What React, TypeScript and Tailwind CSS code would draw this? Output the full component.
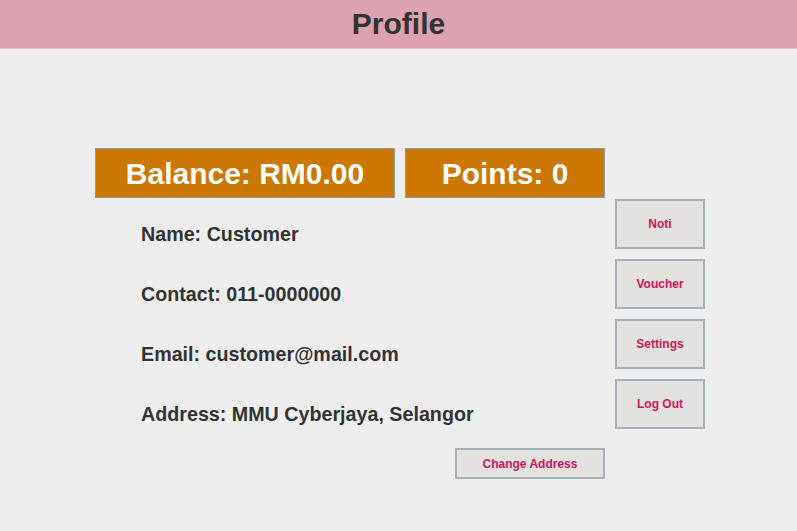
const details = [
  "Name: Customer",
  "Contact: 011-0000000",
  "Email: customer@mail.com",
  "Address: MMU Cyberjaya, Selangor",
]

const actions = ["Noti", "Voucher", "Settings", "Log Out"]

export default function App() {
  return (
    <div className="min-h-[531px] bg-[#eeeeee] font-['Liberation_Sans',Arial,sans-serif] text-[#333333]">
      <header className="h-[49px] bg-[#dda2b0] border-b border-[#e6c3cb] flex items-center justify-center">
        <h1 className="text-[30px] font-bold leading-none">Profile</h1>
      </header>

      <div className="ml-[95px] mt-[99px] w-[610px]">
        <div className="flex gap-[10px]">
          <div className="w-[300px] h-[50px] bg-[#cc7700] border border-[#8b9bab] flex items-center justify-center text-white text-[30px] font-bold">
            Balance: RM0.00
          </div>
          <div className="w-[200px] h-[50px] bg-[#cc7700] border border-[#8b9bab] flex items-center justify-center text-white text-[30px] font-bold">
            Points: 0
          </div>
        </div>

        <div className="flex gap-[10px]">
          <div className="w-[510px] flex flex-col">
            <div className="pl-[46px] pt-[24px] flex flex-col gap-[36px]">
              {details.map((line) => (
                <p key={line} className="text-[19.7px] font-bold leading-6">
                  {line}
                </p>
              ))}
            </div>
            <button className="self-end mt-[22px] w-[150px] h-[31px] bg-[#e4e2df] border-2 border-[#a6b0ba] text-[12px] font-bold text-[#d4145a]">
              Change Address
            </button>
          </div>

          <div className="w-[90px] pt-[1px] flex flex-col gap-[10px]">
            {actions.map((a) => (
              <button
                key={a}
                className="h-[50px] bg-[#e4e2df] border-2 border-[#a6b0ba] text-[12px] font-bold text-[#d4145a]"
              >
                {a}
              </button>
            ))}
          </div>
        </div>
      </div>
    </div>
  )
}
